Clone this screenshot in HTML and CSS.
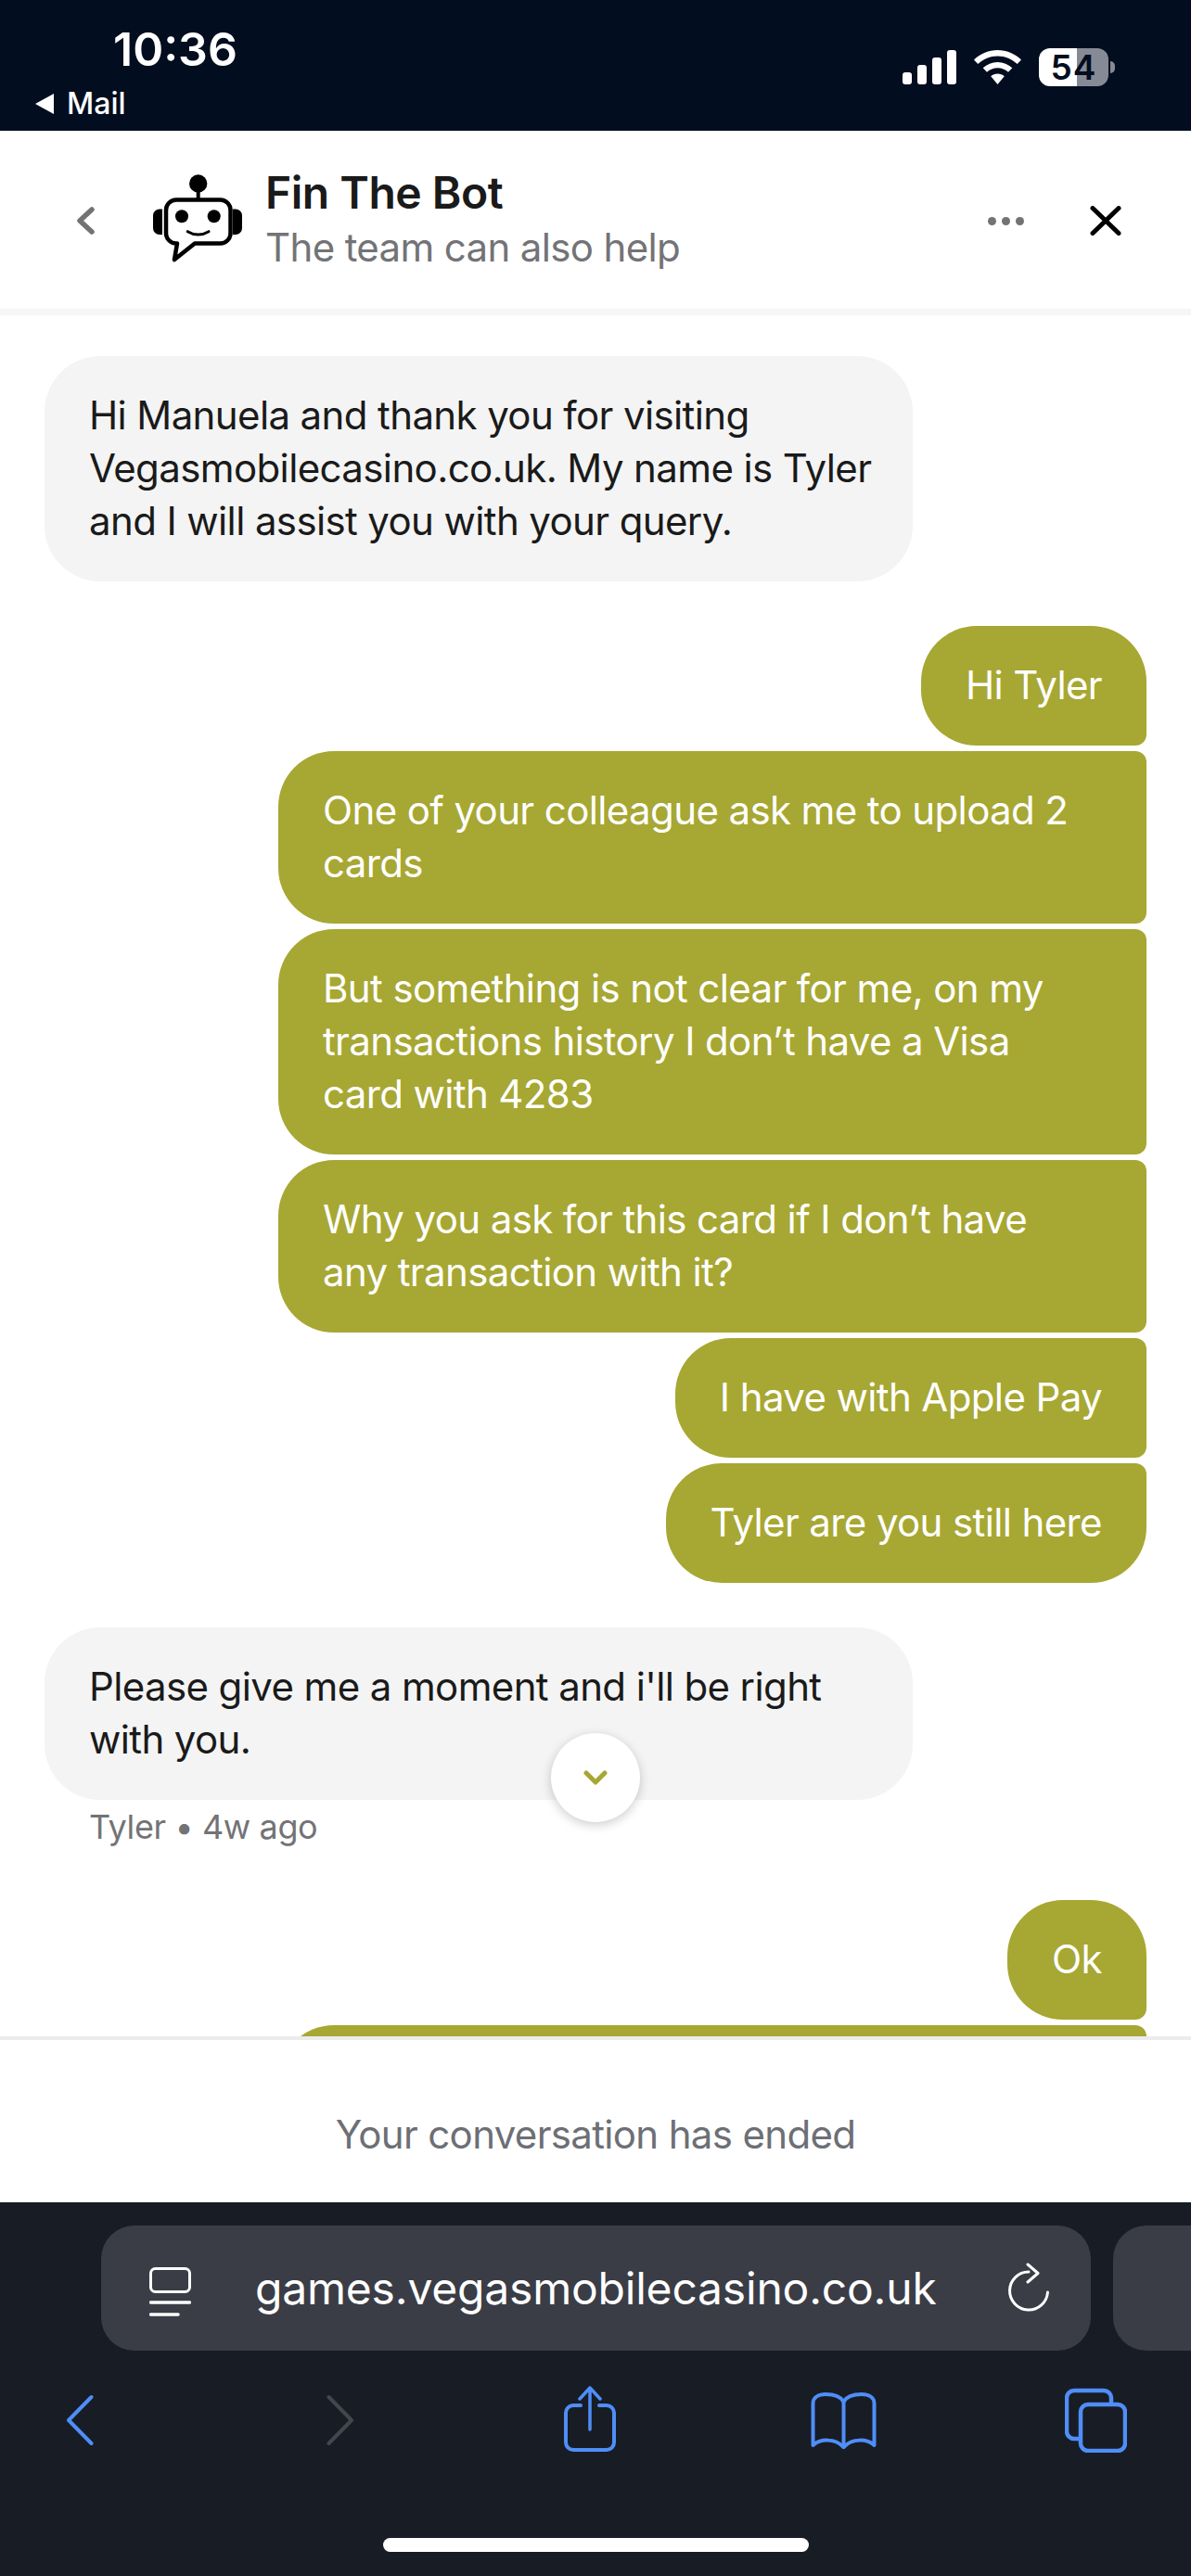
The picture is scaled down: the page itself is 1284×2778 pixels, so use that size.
FILE: index.html
```html
<!DOCTYPE html>
<html lang="en">

<head>
    <meta charset="UTF-8">
    <meta name="viewport" content="width=device-width, initial-scale=1.0">
    <title>Fin The Bot</title>
    <link rel="stylesheet" href="styles.css">
</head>

<body>
    <!-- Phone status bar -->
    <div class="status">
        <div class="status-left">
            <div class="time">10:36</div>
            <div class="mail"><span class="mail-arrow"></span>Mail</div>
        </div>
        <div class="status-right">
            <svg class="signal" width="58" height="37" viewBox="0 0 58 37" fill="#fff">
                <rect x="0" y="24" width="10" height="13" rx="3" />
                <rect x="16" y="16" width="10" height="21" rx="3" />
                <rect x="32" y="8" width="10" height="29" rx="3" />
                <rect x="48" y="0" width="10" height="37" rx="3" />
            </svg>
            <svg class="wifi" width="51" height="37" viewBox="0 0 51 37" fill="#fff">
                <path d="M25.500 0C35 0 44 3.800 51 10.500L46.700 15C41 9.500 33.500 6.400 25.500 6.400S10 9.500 4.300 15L0 10.500C7 3.800 16 0 25.500 0Z" />
                <path d="M25.500 13C31.500 13 37 15.300 41.300 19.300L37 23.800C33.800 20.900 29.800 19.300 25.500 19.300S17.200 20.900 14 23.800L9.700 19.300C14 15.300 19.500 13 25.500 13Z" />
                <path d="M25.500 25.500C28.300 25.500 30.800 26.500 32.800 28.300L25.500 37L18.200 28.300C20.200 26.500 22.700 25.500 25.500 25.500Z" />
            </svg>
            <div class="battery">54</div>
            <div class="battery-nub"></div>
        </div>
    </div>

    <!-- Chat header -->
    <div class="header">
        <svg class="back" width="19" height="30" viewBox="0 0 19 30">
            <path d="M16 3L3 15L16 27" fill="none" stroke="#737376" stroke-width="5.500" stroke-linecap="round" stroke-linejoin="round" />
        </svg>
        <svg class="robot" width="96" height="96" viewBox="0 0 96 96">
            <circle cx="48.700" cy="10" r="9.700" fill="#000" />
            <path d="M48.700 18V27" stroke="#000" stroke-width="4" />
            <path d="M25 27.500H72.500a11 11 0 0 1 11 11V63.500a11 11 0 0 1 -11 11H45L23 92L26 74.500H25a11 11 0 0 1 -11 -11V38.500a11 11 0 0 1 11 -11Z" fill="#fff" stroke="#000" stroke-width="4.500" stroke-linejoin="round" />
            <path d="M10 37.500V65H7a7 7 0 0 1 -7 -7V44.500a7 7 0 0 1 7 -7Z" fill="#000" />
            <path d="M86 37.500V65H89a7 7 0 0 0 7 -7V44.500a7 7 0 0 0 -7 -7Z" fill="#000" />
            <circle cx="31" cy="45.300" r="7" fill="#000" />
            <circle cx="65.700" cy="45.300" r="7" fill="#000" />
            <path d="M37.300 61.700Q48.700 68.500 60 61.700" fill="none" stroke="#000" stroke-width="3" stroke-linecap="round" />
        </svg>
        <div class="header-text">
            <div class="header-title">Fin The Bot</div>
            <div class="header-sub">The team can also help</div>
        </div>
        <div class="dots"><span></span><span></span><span></span></div>
        <svg class="close" width="34" height="32" viewBox="0 0 34 32">
            <path d="M3 2.500L31 29.500M31 2.500L3 29.500" stroke="#000" stroke-width="5" stroke-linecap="round" />
        </svg>
    </div>

    <!-- Messages -->
    <div class="chat">
        <div class="bubble agent">Hi Manuela and thank you for visiting<br>Vegasmobilecasino.co.uk. My name is Tyler<br>and I will assist you with your query.</div>

        <div class="bubble user first next-group">Hi Tyler</div>
        <div class="bubble user middle wide">One of your colleague ask me to upload 2<br>cards</div>
        <div class="bubble user middle wide">But something is not clear for me, on my<br>transactions history I don’t have a Visa<br>card with 4283</div>
        <div class="bubble user middle wide">Why you ask for this card if I don’t have<br>any transaction with it?</div>
        <div class="bubble user middle">I have with Apple Pay</div>
        <div class="bubble user last">Tyler are you still here</div>

        <div class="bubble agent next-group">Please give me a moment and i'll be right<br>with you.</div>
        <div class="meta">Tyler • 4w ago</div>

        <div class="bubble user first after-meta">Ok</div>
        <div class="bubble user middle wide">&nbsp;<br>&nbsp;</div>

        <div class="scroll-down">
            <svg width="26" height="16" viewBox="0 0 26 16">
                <path d="M3 3L13 13L23 3" fill="none" stroke="#a7a733" stroke-width="5" stroke-linecap="round" stroke-linejoin="round" />
            </svg>
        </div>
    </div>

    <div class="ended">Your conversation has ended</div>

    <!-- Safari bars -->
    <div class="browser">
        <div class="address-row">
            <div class="address">
                <svg class="reader" width="45" height="53" viewBox="0 0 45 53">
                    <rect x="1.500" y="1.500" width="42" height="25" rx="5" fill="none" stroke="#fff" stroke-width="3" />
                    <path d="M1.500 38H43.500M1.500 51H31" stroke="#fff" stroke-width="3.500" stroke-linecap="round" />
                </svg>
                <div class="url">games.vegasmobilecasino.co.uk</div>
                <svg class="reload" width="46" height="56" viewBox="0 0 46 56">
                    <path d="M23 10A20.500 20.500 0 1 0 43.500 32" fill="none" stroke="#fff" stroke-width="3" stroke-linecap="round" />
                    <path d="M22 2L33 11.500L22 21" fill="none" stroke="#fff" stroke-width="3" stroke-linecap="round" stroke-linejoin="round" />
                </svg>
            </div>
            <div class="address next-tab"></div>
        </div>
        <div class="toolbar">
            <svg class="tool-back" width="30" height="72" viewBox="0 0 30 72">
                <path d="M27.500 12L3 37L27.500 62" fill="none" stroke="#4f8ef7" stroke-width="4" stroke-linecap="round" stroke-linejoin="round" />
            </svg>
            <svg class="tool-forward" width="30" height="72" viewBox="0 0 30 72">
                <path d="M2.500 12L27 37L2.500 62" fill="none" stroke="#43464d" stroke-width="4" stroke-linecap="round" stroke-linejoin="round" />
            </svg>
            <svg class="tool-share" width="56" height="72" viewBox="0 0 56 72" fill="none" stroke="#4f8ef7" stroke-linecap="round" stroke-linejoin="round">
                <path d="M18 21H10a8 8 0 0 0 -8 8V61a8 8 0 0 0 8 8H46a8 8 0 0 0 8 -8V29a8 8 0 0 0 -8 -8H38" stroke-width="4" />
                <path d="M28 47V2M17 14L28 2L39 14" stroke-width="3.500" />
            </svg>
            <svg class="tool-book" width="71" height="72" viewBox="0 0 71 72" fill="none" stroke="#4f8ef7" stroke-width="4" stroke-linecap="round" stroke-linejoin="round">
                <path d="M35.500 17C32 11 24 9 16 9C9 9 2.500 12 2.500 19V64C10 57 26 56 35.500 66C45 56 61 57 68.500 64V19C68.500 12 62 9 55 9C47 9 39 11 35.500 17Z" />
                <path d="M35.500 17V66" />
            </svg>
            <svg class="tool-tabs" width="67" height="72" viewBox="0 0 67 72" fill="none" stroke="#4f8ef7" stroke-width="4.500" stroke-linejoin="round">
                <path d="M50 20V13a8 8 0 0 0 -8 -8H10a8 8 0 0 0 -8 8V49a8 8 0 0 0 8 8H16" />
                <rect x="17" y="20" width="48" height="50" rx="8" />
            </svg>
        </div>
        <div class="home-bar"></div>
    </div>
</body>

</html>
```
FILE: styles.css
```css
body {
    margin: 0;
    width: 1284px;
    height: 2778px;
    overflow: hidden;
    display: flex;
    flex-direction: column;
    font-family: Inter, "Noto Sans", sans-serif;
    background-color: white;
}

/* status bar */
.status {
    height: 141px;
    flex-shrink: 0;
    display: flex;
    justify-content: space-between;
    background-color: #020d1f;
    color: white;
}

.status-left {
    padding-top: 24px;
    padding-left: 38px;
}

.time {
    margin-left: 84px;
    font-size: 50px;
    line-height: 58px;
    font-weight: 600;
}

.mail {
    display: flex;
    align-items: center;
    margin-top: 11px;
    font-size: 32px;
    line-height: 38px;
    font-weight: 500;
}

.mail-arrow {
    width: 0;
    height: 0;
    margin-right: 14px;
    border-top: 11px solid transparent;
    border-bottom: 11px solid transparent;
    border-right: 20px solid white;
}

.status-right {
    display: flex;
    align-items: center;
    height: 37px;
    margin-top: 54px;
    margin-right: 82px;
}

.wifi {
    margin-left: 19px;
}

.battery {
    width: 75px;
    height: 41px;
    margin-left: 19px;
    border-radius: 12px;
    background: linear-gradient(90deg, white 55%, #868a94 55%);
    color: #020d1f;
    font-size: 37px;
    font-weight: 600;
    line-height: 41px;
    letter-spacing: 1px;
    text-align: center;
}

.battery-nub {
    width: 5px;
    height: 13px;
    margin-left: 2px;
    border-radius: 0 6px 6px 0;
    background-color: #868a94;
}

/* chat header */
.header {
    height: 192px;
    flex-shrink: 0;
    display: flex;
    align-items: center;
    border-bottom: 7px solid #f6f6f6;
}

.back {
    margin-left: 83px;
    margin-top: 2px;
}

.robot {
    margin-left: 63px;
    margin-top: -2px;
}

.header-text {
    margin-left: 25px;
    flex-grow: 1;
}

.header-title {
    font-size: 48px;
    line-height: 58px;
    font-weight: 600;
    letter-spacing: -0.5px;
    color: #1a1a1a;
}

.header-sub {
    font-size: 42px;
    line-height: 59px;
    letter-spacing: -0.65px;
    color: #737376;
}

.dots {
    display: flex;
    gap: 6px;
    margin-top: 2px;
    margin-left: -2px;
}

.dots span {
    width: 9px;
    height: 9px;
    border-radius: 50%;
    background-color: #737376;
}

.close {
    margin-left: 71px;
    margin-right: 75px;
    margin-top: 2px;
}

/* messages */
.chat {
    position: relative;
    flex-grow: 1;
    overflow: hidden;
    display: flex;
    flex-direction: column;
    align-items: flex-start;
    padding: 44px 48px 0;
}

.bubble {
    flex-shrink: 0;
    box-sizing: border-box;
    padding: 35px 48px 37px;
    font-size: 42px;
    line-height: 57px;
    letter-spacing: -0.62px;
    white-space: nowrap;
}

.agent {
    width: 936px;
    border-radius: 60px;
    background-color: #f4f4f4;
    color: #1a1a1a;
}

.user {
    align-self: flex-end;
    margin-top: 6px;
    background-color: #a7a733;
    color: white;
}

.first {
    border-radius: 60px 60px 12px 60px;
}

.middle {
    border-radius: 60px 12px 12px 60px;
}

.last {
    border-radius: 60px 12px 60px 60px;
}

.wide {
    width: 936px;
}

.next-group {
    margin-top: 48px;
}

.after-meta {
    margin-top: 61px;
}

.meta {
    margin-top: 11px;
    padding-left: 48px;
    font-size: 36px;
    line-height: 36px;
    letter-spacing: -0.4px;
    color: #737376;
    flex-shrink: 0;
}

.scroll-down {
    position: absolute;
    left: 594px;
    top: 1529px;
    width: 96px;
    height: 96px;
    display: flex;
    align-items: center;
    justify-content: center;
    border-radius: 50%;
    background-color: white;
    box-shadow: 0 3px 12px rgba(0, 0, 0, 0.2);
}

/* footer */
.ended {
    height: 179px;
    flex-shrink: 0;
    box-sizing: border-box;
    border-top: 4px solid #ececec;
    padding-top: 77px;
    text-align: center;
    font-size: 42px;
    line-height: 50px;
    letter-spacing: -0.66px;
    color: #6d6f75;
}

/* safari */
.browser {
    height: 403px;
    flex-shrink: 0;
    background-color: #181c25;
}

.address-row {
    display: flex;
    gap: 24px;
    padding-top: 25px;
    padding-left: 109px;
}

.address {
    width: 1067px;
    height: 135px;
    flex-shrink: 0;
    display: flex;
    align-items: center;
    border-radius: 36px;
    background-color: #3a3d46;
}

.next-tab {
    width: 120px;
}

.reader {
    margin-left: 52px;
    margin-top: 7px;
}

.url {
    margin-left: 69px;
    flex-grow: 1;
    font-size: 48px;
    line-height: 60px;
    letter-spacing: -0.2px;
    color: white;
}

.reload {
    margin-right: 44px;
}

.toolbar {
    display: flex;
    padding-top: 38px;
}

.tool-back {
    margin-left: 71px;
}

.tool-forward {
    margin-left: 251px;
}

.tool-share {
    margin-left: 226px;
}

.tool-book {
    margin-left: 210px;
}

.tool-tabs {
    margin-left: 203px;
}

.home-bar {
    width: 459px;
    height: 15px;
    margin: 92px 0 0 413px;
    border-radius: 8px;
    background-color: white;
}
```
